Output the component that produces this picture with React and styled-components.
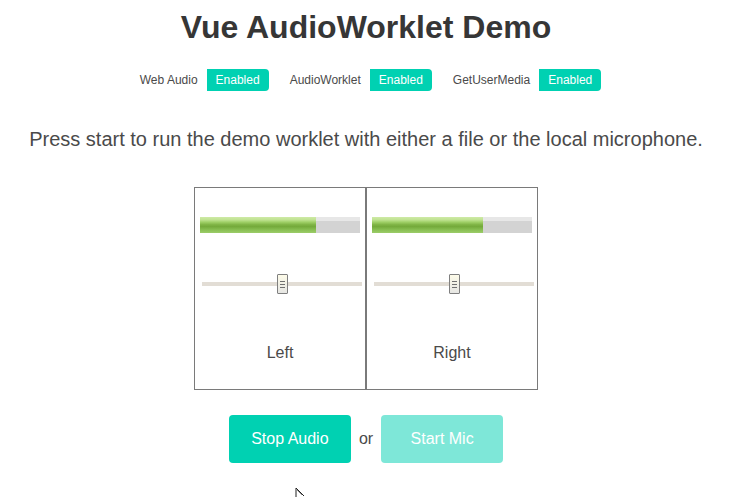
import React from 'react';
import styled, { createGlobalStyle } from 'styled-components';

const GlobalStyle = createGlobalStyle`
    html, body {
        margin: 0;
        padding: 0;
        background: #fff;
    }
    body {
        font-family: "Liberation Sans", Arial, sans-serif;
        color: #4a4a4a;
    }
`;

const channels = [
    { name: 'Left', level: 72.5, pan: 50 },
    { name: 'Right', level: 69.4, pan: 50 },
];

const features = ['Web Audio', 'AudioWorklet', 'GetUserMedia'];

const App = () => {
    return (
        <Page>
            <GlobalStyle />
            <Title>Vue AudioWorklet Demo</Title>

            <Features>
                {features.map((f) => (
                    <TagGroup key={f}>
                        <Tag>{f}</Tag>
                        <Tag $on>Enabled</Tag>
                    </TagGroup>
                ))}
            </Features>

            <Intro>Press start to run the demo worklet with either a file or the local microphone.</Intro>

            <Mixer>
                {channels.map((c) => (
                    <Channel key={c.name}>
                        <Meter>
                            <MeterFill style={{ width: `${c.level}%` }} />
                        </Meter>
                        <Slider>
                            <Track />
                            <Thumb style={{ left: `${c.pan}%` }}>
                                <Grip />
                                <Grip />
                                <Grip />
                            </Thumb>
                        </Slider>
                        <Label>{c.name}</Label>
                    </Channel>
                ))}
            </Mixer>

            <Controls>
                <Button>Stop Audio</Button>
                <Or>or</Or>
                <Button disabled>Start Mic</Button>
            </Controls>

            <Cursor width="12" height="12" viewBox="0 0 12 12">
                <path d="M1 1 L1 10 M1 1 L9 9" stroke="#222" strokeWidth="1" fill="none" />
                <path d="M2 3 L7 8" stroke="#888" strokeWidth="1" fill="none" />
            </Cursor>
        </Page>
    );
};

export default App;



const Page = styled.div`
    position: relative;
    width: 729px;
    height: 497px;
    padding-left: 3px;
    box-sizing: border-box;
    display: flex;
    flex-direction: column;
    align-items: center;
    overflow: hidden;
`;

const Title = styled.h1`
    margin: 7px 0 0;
    font-size: 32px;
    line-height: 40px;
    font-weight: 700;
    color: #363636;
`;

const Features = styled.div`
    display: flex;
    gap: 12px;
    margin-top: 22px;
`;

const TagGroup = styled.div`
    display: flex;
`;

const Tag = styled.span`
    display: inline-flex;
    align-items: center;
    height: 22px;
    padding: 0 9px;
    font-size: 12px;
    color: ${(p) => (p.$on ? '#fff' : '#4a4a4a')};
    background: ${(p) => (p.$on ? '#00d1b2' : 'transparent')};
    border-radius: ${(p) => (p.$on ? '0 4px 4px 0' : '4px 0 0 4px')};
`;

const Intro = styled.p`
    margin: 36px 0 0;
    font-size: 20px;
    line-height: 24px;
    color: #4a4a4a;
`;

const Mixer = styled.div`
    display: flex;
    margin-top: 36px;
`;

const Channel = styled.div`
    width: 160px;
    height: 172px;
    border: 1px solid #7a7a7a;
    padding: 29px 5px 0;
    box-sizing: content-box;
    display: flex;
    flex-direction: column;
    align-items: center;
`;

const Meter = styled.div`
    width: 160px;
    height: 16px;
    background: linear-gradient(to bottom, #e7e7e7 0, #e7e7e7 4px, #d3d3d3 4px, #d3d3d3 100%);
`;

const MeterFill = styled.div`
    height: 100%;
    background: linear-gradient(
        to bottom,
        #cfeaa6 0%,
        #bfe291 18%,
        #9fd067 32%,
        #7fb445 48%,
        #74aa3b 60%,
        #86bd50 78%,
        #9ccd69 100%
    );
`;

const Slider = styled.div`
    position: relative;
    align-self: flex-start;
    width: 160px;
    height: 20px;
    margin: 41px 0 0 2px;
    display: flex;
    align-items: center;
`;

const Track = styled.div`
    width: 100%;
    height: 4px;
    background: #e2ddd5;
`;

const Thumb = styled.div`
    position: absolute;
    top: 0;
    width: 11px;
    height: 20px;
    margin-left: -5px;
    box-sizing: border-box;
    border: 1px solid #7f7f7f;
    border-radius: 1px;
    background: linear-gradient(to bottom, #fdfbe9, #e6e6e3);
    display: flex;
    flex-direction: column;
    align-items: center;
    justify-content: center;
    gap: 2px;
`;

const Grip = styled.span`
    display: block;
    width: 5px;
    height: 1px;
    background: #707070;
`;

const Label = styled.div`
    margin-top: 50px;
    font-size: 16px;
    color: #4a4a4a;
`;

const Controls = styled.div`
    display: flex;
    align-items: center;
    gap: 8px;
    margin-top: 25px;
`;

const Button = styled.button`
    width: 122px;
    height: 48px;
    border: none;
    border-radius: 4px;
    background: #00d1b2;
    color: #fff;
    font-family: "Liberation Sans", Arial, sans-serif;
    font-size: 16px;
    cursor: pointer;

    &:disabled {
        opacity: 0.5;
        cursor: not-allowed;
    }
`;

const Or = styled.span`
    font-size: 16px;
    color: #4a4a4a;
`;

const Cursor = styled.svg`
    position: absolute;
    left: 295px;
    top: 487px;
`;
